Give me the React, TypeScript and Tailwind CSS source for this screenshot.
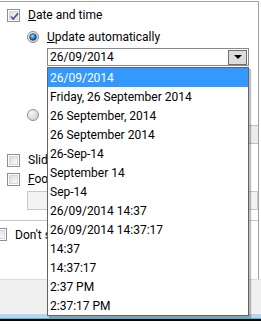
import React from "react";

const formats = [
	"26/09/2014",
	"Friday, 26 September 2014",
	"26 September, 2014",
	"26 September 2014",
	"26-Sep-14",
	"September 14",
	"Sep-14",
	"26/09/2014 14:37",
	"26/09/2014 14:37:17",
	"14:37",
	"14:37:17",
	"2:37 PM",
	"2:37:17 PM",
];

function CheckBox({ checked = false }: { checked?: boolean }) {
	return (
		<div className="w-[13px] h-[13px] shrink-0 border border-[#8e8f8f] bg-white p-px">
			<div className="relative w-full h-full border border-[#d6d6d6] bg-gradient-to-br from-[#dcdcdc] to-[#fbfbfb]">
				{checked && (
					<svg className="absolute -left-px -top-px" width="11" height="11" viewBox="0 0 11 11">
						<path d="M2 5.5 L4.3 8 L9 2.2" fill="none" stroke="#3d52a0" strokeWidth="1.7" strokeLinejoin="round" />
					</svg>
				)}
			</div>
		</div>
	);
}

function Radio({ checked = false }: { checked?: boolean }) {
	return (
		<svg width="12" height="12" viewBox="0 0 12 12" className="shrink-0">
			<defs>
				<radialGradient id="rfill" cx="0.35" cy="0.3" r="0.8">
					<stop offset="0" stopColor="#f6f6f6" />
					<stop offset="1" stopColor="#cfcfcf" />
				</radialGradient>
				<radialGradient id="rdot" cx="0.4" cy="0.35" r="0.7">
					<stop offset="0" stopColor="#9fe0ff" />
					<stop offset="0.6" stopColor="#1a80c8" />
					<stop offset="1" stopColor="#0b3a6e" />
				</radialGradient>
			</defs>
			<circle cx="6" cy="6" r="5.5" fill="url(#rfill)" stroke="#8e8f8f" strokeWidth="1" />
			{checked && <circle cx="6" cy="6" r="3.3" fill="url(#rdot)" stroke="#1f3a5a" strokeWidth="0.8" />}
		</svg>
	);
}

export default function App() {
	return (
		<div className="relative w-[261px] h-[330px] overflow-hidden bg-white text-[12px] leading-none text-black font-['Roboto',sans-serif]">
			<div className="mt-px w-[259px] h-[278px] border-t border-r border-[#a0a0a0] flex flex-col">
				<div className="mt-[5px] h-4 pl-[7px] flex items-center gap-2">
					<CheckBox checked />
					<span>
						<span className="underline">D</span>ate and time
					</span>
				</div>
				<div className="mt-[6px] h-4 pl-[27px] flex items-center gap-2">
					<Radio checked />
					<span>
						<span className="underline">U</span>pdate automatically
					</span>
				</div>
				<div className="mt-[3px] ml-[47px] w-[202px] h-[18px] border border-[#8a8a8a] flex items-center pl-[2px] pr-px">
					<span className="flex-1">26/09/2014</span>
					<div className="w-[19px] h-[15px] border border-[#707070] bg-[#dcdcdc] flex items-center justify-center">
						<div className="w-0 h-0 border-l-[4px] border-r-[4px] border-t-[4px] border-l-transparent border-r-transparent border-t-black" />
					</div>
				</div>
				<div className="mt-[41px] h-4 pl-[27px] flex items-center gap-2">
					<Radio />
				</div>
				<div className="mt-[2px] ml-[47px] h-[19px] border-y border-[#c0c0c0] bg-[#ececec]" />
				<div className="mt-[8px] h-4 w-[47px] pl-[7px] flex items-center gap-2 overflow-hidden whitespace-nowrap">
					<CheckBox />
					<span>Slide number</span>
				</div>
				<div className="mt-[3px] h-4 w-[47px] pl-[7px] flex items-center gap-2 overflow-hidden whitespace-nowrap">
					<CheckBox />
					<span>
						<span className="underline">F</span>ooter
					</span>
				</div>
				<div className="mt-[4px] ml-[27px] h-[19px] border border-[#c8c8c8] bg-[#f3f3f3]" />
				<div className="mt-[10px] border-t border-[#c8c8c8]" />
				<div className="mt-[7px] h-4 w-[47px] overflow-hidden whitespace-nowrap">
					<div className="-ml-[6px] flex items-center gap-2">
						<CheckBox />
						<span>Don't show on title slide</span>
					</div>
				</div>
			</div>
			<div className="h-[35px] bg-[#f0f0f0] border-t border-[#dcdcdc]" />
			<div className="h-[5px] bg-[#bcd4ec] border-b border-[#33c3e8]" />
			<div className="h-[2px] bg-black" />

			<div className="absolute left-[47px] top-[67px] w-[202px] h-[249px] border border-[#646464] bg-white shadow-[2px_2px_1px_rgba(0,0,0,0.25)]">
				{formats.map((f, i) => (
					<div
						key={f}
						className={
							i === 0
								? "h-[19px] pl-[2px] flex items-center bg-[#3399ff] text-white"
								: "h-[19px] pl-[2px] flex items-center"
						}
					>
						{f}
					</div>
				))}
			</div>
		</div>
	);
}
